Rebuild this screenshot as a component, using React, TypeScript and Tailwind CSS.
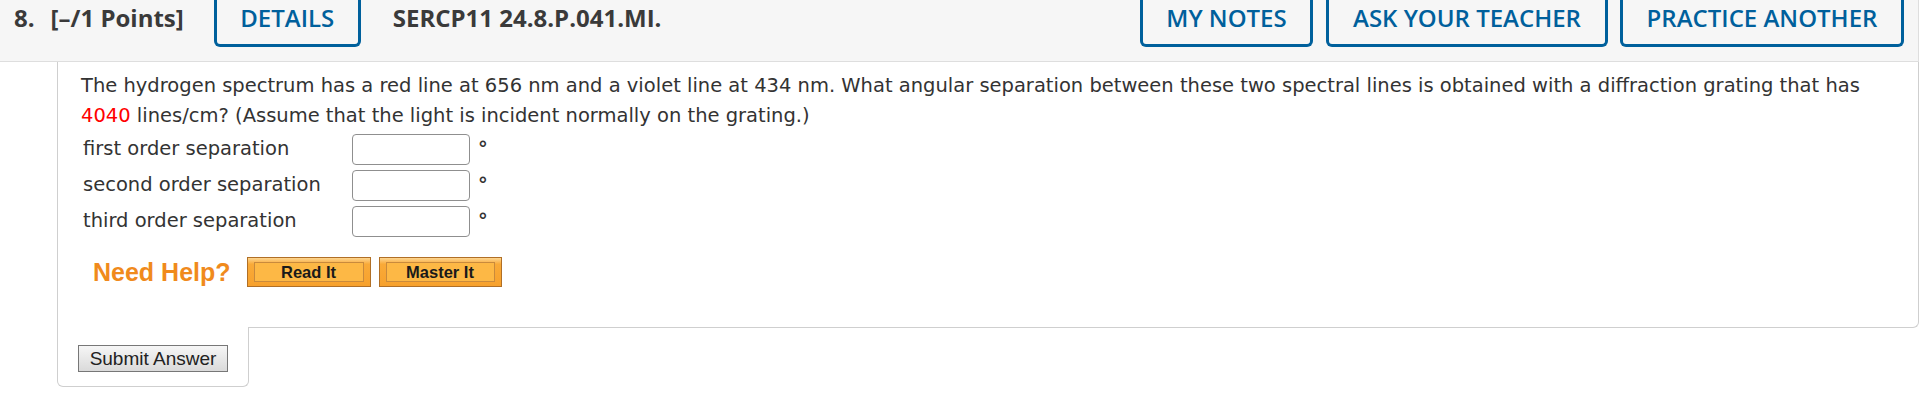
import React from "react";

function HeaderBox({ label, w, ml }: { label: string; w: string; ml: string }) {
  return (
    <div
      className={`${w} ${ml} h-[47px] border-x-[3px] border-b-[3px] border-[#00609c] rounded-b-[6px] flex justify-center shrink-0`}
    >
      <span className="pt-[2px] leading-[32px] text-[24px] font-semibold text-[#00609c] whitespace-nowrap">
        {label}
      </span>
    </div>
  );
}

function Row({ label }: { label: string }) {
  return (
    <div className="flex items-center h-[36px]">
      <span className="w-[271px] pl-[2px] leading-[30px]">{label}</span>
      <input
        type="text"
        className="w-[118px] h-[31px] border border-[#8f8f8f] rounded-[4px] bg-white outline-none"
      />
      <span className="ml-[8px] leading-[30px] font-bold">°</span>
    </div>
  );
}

function OrangeButton({ label, w, ml }: { label: string; w: string; ml: string }) {
  return (
    <button
      className={`${w} ${ml} h-[30px] border border-[#b06f26] bg-[linear-gradient(#fdd590,#f9aa38_22%,#f7a12d)] px-[6px] py-[4px] flex font-['Liberation_Sans',Arial,sans-serif]`}
    >
      <span className="flex-1 border border-[#c98a3c] bg-[#fdb845] flex items-center justify-center font-bold text-[16.5px] text-[#1a1a1a] leading-none">
        {label}
      </span>
    </button>
  );
}

export default function App() {
  return (
    <div className="w-[1928px] h-[407px] bg-white overflow-hidden">
      {/* Header */}
      <div className="w-[1919px] h-[62px] bg-[#f6f6f6] border-b border-r border-[#dedede] flex items-start pl-[14px] pr-[14px] font-['Open_Sans',sans-serif]">
        <span className="pt-[2px] leading-[32px] text-[24px] font-bold text-[#3a3a3a]">8.</span>
        <span className="ml-[16px] pt-[2px] leading-[32px] text-[24px] font-bold text-[#3a3a3a] whitespace-nowrap">
          [–/1 Points]
        </span>
        <HeaderBox label="DETAILS" w="w-[147px]" ml="ml-[30px]" />
        <span className="ml-[32px] pt-[2px] leading-[32px] text-[24px] font-bold text-[#3a3a3a] whitespace-nowrap">
          SERCP11 24.8.P.041.MI.
        </span>
        <div className="ml-auto flex">
          <HeaderBox label="MY NOTES" w="w-[173px]" ml="ml-0" />
          <HeaderBox label="ASK YOUR TEACHER" w="w-[282px]" ml="ml-[13px]" />
          <HeaderBox label="PRACTICE ANOTHER" w="w-[284px]" ml="ml-[12px]" />
        </div>
      </div>

      {/* Question panel */}
      <div className="ml-[57px] w-[1862px] border-l border-r border-b border-[#cfcfcf] rounded-br-[6px] pl-[23px] pt-[9px] pb-[40px] font-['DejaVu_Sans',Verdana,sans-serif] text-[19.5px] text-[#333]">
        <p className="leading-[30px] whitespace-nowrap">
          The hydrogen spectrum has a red line at 656 nm and a violet line at 434 nm. What angular separation between these two spectral lines is obtained with a diffraction grating that has
          <br />
          <span className="text-[#ff0000]">4040</span> lines/cm? (Assume that the light is incident normally on the grating.)
        </p>
        <Row label="first order separation" />
        <Row label="second order separation" />
        <Row label="third order separation" />
        <div className="flex items-center mt-[18px] h-[30px]">
          <span className="ml-[12px] font-['Liberation_Sans',Arial,sans-serif] font-bold text-[25px] text-[#f08a1c] leading-none">
            Need Help?
          </span>
          <OrangeButton label="Read It" w="w-[124px]" ml="ml-[16px]" />
          <OrangeButton label="Master It" w="w-[123px]" ml="ml-[8px]" />
        </div>
      </div>

      {/* Submit tab */}
      <div className="ml-[57px] -mt-px w-[192px] border-x border-b border-[#cfcfcf] rounded-b-[6px] bg-white pl-[20px] pt-[18px] pb-[14px] relative">
        <button className="w-[150px] h-[27px] border border-[#777] bg-[linear-gradient(#f6f6f6,#dadada)] font-['Liberation_Sans',Arial,sans-serif] text-[19px] text-[#222] leading-none flex items-center justify-center">
          Submit Answer
        </button>
      </div>
    </div>
  );
}
